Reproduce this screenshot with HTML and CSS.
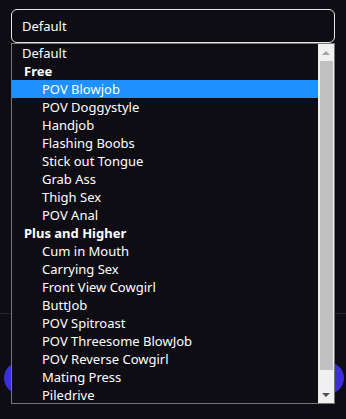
FILE: index.html
```html
<!DOCTYPE html>
<html>
<head>
<meta charset="utf-8">
<link rel="stylesheet" href="styles.css">
</head>
<body>
<div class="page">
  <div class="field">
    <div class="select">Default</div>
    <div class="list">
      <div class="options">
        <div class="opt">Default</div>
        <div class="group">Free</div>
        <div class="opt sub active">POV Blowjob</div>
        <div class="opt sub">POV Doggystyle</div>
        <div class="opt sub">Handjob</div>
        <div class="opt sub">Flashing Boobs</div>
        <div class="opt sub">Stick out Tongue</div>
        <div class="opt sub">Grab Ass</div>
        <div class="opt sub">Thigh Sex</div>
        <div class="opt sub">POV Anal</div>
        <div class="group">Plus and Higher</div>
        <div class="opt sub">Cum in Mouth</div>
        <div class="opt sub">Carrying Sex</div>
        <div class="opt sub">Front View Cowgirl</div>
        <div class="opt sub">ButtJob</div>
        <div class="opt sub">POV Spitroast</div>
        <div class="opt sub">POV Threesome BlowJob</div>
        <div class="opt sub">POV Reverse Cowgirl</div>
        <div class="opt sub">Mating Press</div>
        <div class="opt sub">Piledrive</div>
      </div>
      <div class="scrollbar">
        <div class="sb-btn"><span class="tri up"></span></div>
        <div class="sb-track"><div class="thumb"></div></div>
        <div class="sb-btn"><span class="tri down"></span></div>
      </div>
    </div>
  </div>
  <div class="spacer"></div>
  <div class="divider"></div>
  <div class="footer">
    <div class="button"></div>
  </div>
</div>
</body>
</html>
```
FILE: styles.css
```css
html, body {
  margin: 0;
  padding: 0;
  background: #0e0d14;
}
body {
  width: 346px;
  height: 419px;
  overflow: hidden;
  font-family: "Noto Sans", "Open Sans", sans-serif;
  font-size: 13px;
  color: #ffffff;
}
.page {
  display: flex;
  flex-direction: column;
}
.field {
  position: relative;
  margin: 9px 11px 0;
}
.select {
  height: 32px;
  border: 1px solid #e6e6e6;
  border-radius: 6px;
  padding-left: 10px;
  display: flex;
  align-items: center;
  line-height: 18px;
}
.list {
  position: absolute;
  top: 34px;
  left: 0;
  width: 322px;
  height: 359px;
  border: 1px solid #767676;
  background: #0e0d14;
  display: flex;
  z-index: 2;
  overflow: hidden;
}
.options {
  flex: 1;
  display: flex;
  flex-direction: column;
  min-width: 0;
}
.opt, .group {
  height: 18px;
  line-height: 18px;
  padding-left: 10px;
  white-space: nowrap;
  flex-shrink: 0;
}
.group {
  font-weight: 700;
  padding-left: 12px;
}
.opt.sub {
  padding-left: 30px;
}
.opt.active {
  background: #1e90ff;
}
.scrollbar {
  width: 16px;
  background: #f0f0f0;
  display: flex;
  flex-direction: column;
}
.sb-btn {
  height: 17px;
  display: flex;
  align-items: center;
  justify-content: center;
}
.sb-track {
  flex: 1;
  padding: 0 1px 16px 2px;
  display: flex;
}
.thumb {
  flex: 1;
  background: #c1c1c1;
}
.tri {
  width: 0;
  height: 0;
  border-left: 4px solid transparent;
  border-right: 4px solid transparent;
}
.tri.up {
  border-bottom: 4px solid #a3a3a3;
}
.tri.down {
  border-top: 4px solid #505050;
}
.spacer {
  height: 270px;
}
.divider {
  height: 1px;
  background: #24232c;
}
.footer {
  padding: 48px 2px 0 4px;
}
.button {
  height: 32px;
  border-radius: 16px;
  background: #3b2ed8;
}
```
